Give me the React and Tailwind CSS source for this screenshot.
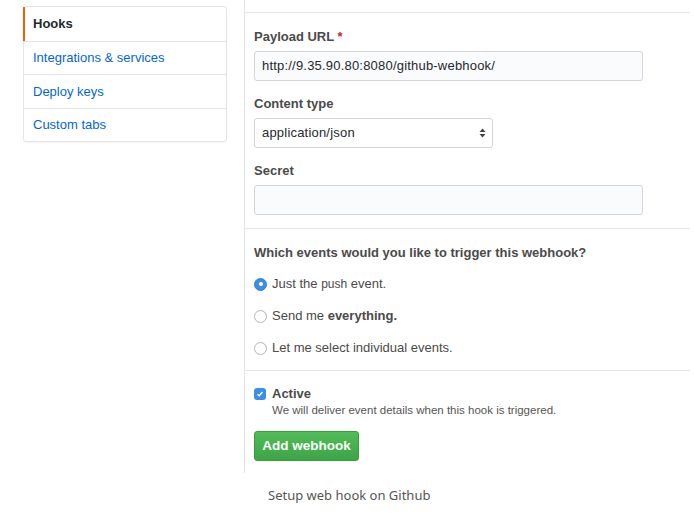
import React from "react";

const font = { fontFamily: '"Liberation Sans", Arial, sans-serif' };

function Radio({ checked }) {
  if (checked) {
    return (
      <span className="w-[13px] h-[13px] rounded-full bg-[#3b8eea] border border-[#2f7fd9] flex items-center justify-center shrink-0">
        <span className="w-[4px] h-[4px] rounded-full bg-white" />
      </span>
    );
  }
  return <span className="w-[13px] h-[13px] rounded-full bg-white border border-[#b5b5b5] shrink-0" />;
}

export default function App() {
  return (
    <div className="w-[694px] h-[527px] bg-white relative overflow-hidden" style={font}>
      <div className="flex pl-[23px]">
        {/* left nav */}
        <div className="mt-[6px] w-[204px] self-start border border-[#e1e4e8] rounded-[3px] text-[13px] shadow-[0_1px_1px_rgba(0,0,0,0.04)]">
          <div className="h-[34px] flex items-center pl-[8px] border-l-2 border-[#e36209] font-bold text-[#24292e] -ml-px">
            Hooks
          </div>
          <div className="h-[33px] flex items-center pl-[9px] border-t border-[#e1e4e8] text-[#0366d6]">
            Integrations &amp; services
          </div>
          <div className="h-[34px] flex items-center pl-[9px] border-t border-[#e1e4e8] text-[#0366d6]">
            Deploy keys
          </div>
          <div className="h-[33px] flex items-center pl-[9px] border-t border-[#e1e4e8] text-[#0366d6]">
            Custom tabs
          </div>
        </div>

        {/* right panel */}
        <div className="ml-[17px] w-[446px] h-[473px] border-l border-[#e1e4e8] pt-[12px]">
          <div className="border-t border-[#e1e4e8] pl-[9px] pt-[15px] pb-[13px]">
            <div className="text-[13px] leading-[18px] font-bold text-[#4a4a4a]">
              Payload URL <span className="text-[#cb2431]">*</span>
            </div>
            <div className="mt-[5px] w-[389px] h-[30px] border border-[#d1d5da] rounded-[3px] bg-[#fafbfc] flex items-center pl-[7px] text-[13px] tracking-[0.2px] text-[#24292e]">
              http://9.35.90.80:8080/github-webhook/
            </div>
            <div className="mt-[14px] text-[13px] leading-[18px] font-bold text-[#4a4a4a]">Content type</div>
            <div className="mt-[5px] w-[239px] h-[30px] border border-[#d1d5da] rounded-[3px] bg-white flex items-center justify-between pl-[7px] pr-[6px] text-[13px] tracking-[0.2px] text-[#24292e]">
              <span>application/json</span>
              <svg width="7" height="10" viewBox="0 0 7 10">
                <path d="M3.5 0.5 L6.5 4 L0.5 4 Z" fill="#444" />
                <path d="M3.5 9.5 L6.5 6 L0.5 6 Z" fill="#444" />
              </svg>
            </div>
            <div className="mt-[14px] text-[13px] leading-[18px] font-bold text-[#4a4a4a]">Secret</div>
            <div className="mt-[5px] w-[389px] h-[30px] border border-[#d1d5da] rounded-[3px] bg-[#fafbfc]" />
          </div>

          <div className="border-t border-[#e1e4e8] pl-[9px] pt-[15px] pb-[6px]">
            <div className="text-[13px] leading-[18px] font-bold text-[#4a4a4a]">
              Which events would you like to trigger this webhook?
            </div>
            <div className="mt-[6px] flex flex-col text-[13px] text-[#4a4a4a]">
              <div className="h-[32px] flex items-center gap-[5px]">
                <Radio checked />
                <span>
                  Just the <span className="text-[12px]">push</span> event.
                </span>
              </div>
              <div className="h-[32px] flex items-center gap-[5px]">
                <Radio />
                <span>
                  Send me <span className="font-bold">everything.</span>
                </span>
              </div>
              <div className="h-[32px] flex items-center gap-[5px]">
                <Radio />
                <span>Let me select individual events.</span>
              </div>
            </div>
          </div>

          <div className="border-t border-[#e1e4e8] pl-[9px] pt-[14px]">
            <div className="flex items-center gap-[6px]">
              <span className="w-[12px] h-[12px] rounded-[3px] bg-[#3b8eea] flex items-center justify-center shrink-0">
                <svg width="8" height="8" viewBox="0 0 8 8">
                  <path d="M1.5 4.2 L3.2 5.8 L6.5 2" stroke="white" strokeWidth="1.4" fill="none" />
                </svg>
              </span>
              <span className="text-[13px] leading-[18px] font-bold text-[#4a4a4a]">Active</span>
            </div>
            <div className="pl-[18px] text-[11.5px] leading-[14px] text-[#555]">
              We will deliver event details when this hook is triggered.
            </div>
            <button className="mt-[14px] w-[105px] h-[30px] rounded-[3px] border border-[#3a9d3e] bg-gradient-to-b from-[#50bd57] to-[#3da447] text-white text-[13.5px] font-bold">
              Add webhook
            </button>
          </div>
        </div>
      </div>
      <div
        className="mt-[13px] ml-[268px] text-[13px] text-[#555]"
        style={{ fontFamily: '"Noto Sans", "Liberation Sans", sans-serif' }}
      >
        Setup web hook on Github
      </div>
    </div>
  );
}
